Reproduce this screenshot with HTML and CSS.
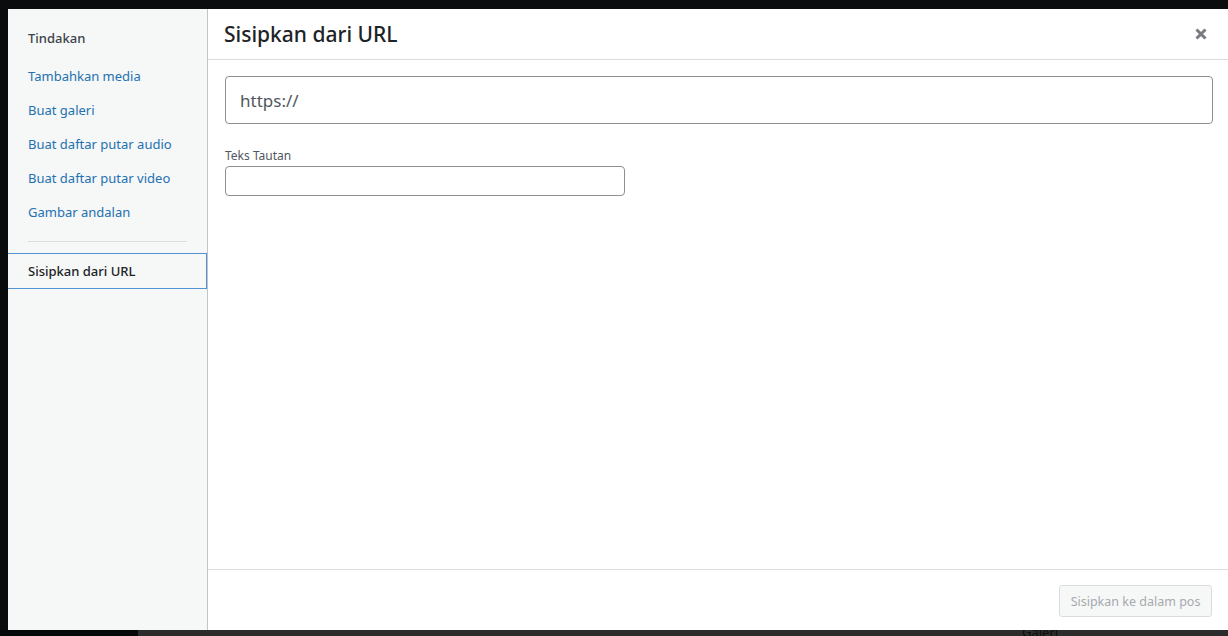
FILE: index.html
```html
<!DOCTYPE html>
<html lang="id">
<head>
<meta charset="utf-8">
<title>Sisipkan dari URL</title>
<link rel="stylesheet" href="styles.css">
</head>
<body>
<div class="screen">
  <div class="top-strip"></div>
  <div class="middle">
    <div class="left-strip"></div>
    <div class="modal">
      <aside class="menu">
        <h2 class="menu-heading">Tindakan</h2>
        <a class="menu-item" href="#">Tambahkan media</a>
        <a class="menu-item" href="#">Buat galeri</a>
        <a class="menu-item" href="#">Buat daftar putar audio</a>
        <a class="menu-item" href="#">Buat daftar putar video</a>
        <a class="menu-item" href="#">Gambar andalan</a>
        <div class="separator"></div>
        <a class="menu-item active" href="#">Sisipkan dari URL</a>
      </aside>
      <section class="frame">
        <header class="frame-title">
          <h1>Sisipkan dari URL</h1>
          <button class="close" aria-label="Tutup">
            <svg width="12" height="12" viewBox="0 0 12 12"><path d="M1.5 1.5 L10.5 10.5 M10.5 1.5 L1.5 10.5" stroke="#787c82" stroke-width="3" stroke-linecap="butt"/></svg>
          </button>
        </header>
        <div class="content">
          <input class="url-input" type="text" value="https://">
          <label class="field-label" for="teks">Teks Tautan</label>
          <input class="text-input" id="teks" type="text">
        </div>
        <footer class="toolbar">
          <button class="btn-insert" disabled>Sisipkan ke dalam pos</button>
        </footer>
      </section>
    </div>
  </div>
  <div class="bottom-strip">
    <div class="bs-dark"></div>
    <div class="bs-gray"><span class="bs-text">Galeri</span></div>
  </div>
</div>
</body>
</html>
```

FILE: styles.css
```css
html, body {
  margin: 0;
  padding: 0;
  height: 100%;
  overflow: hidden;
}
body {
  background: #0b0c0e;
  font-family: "Noto Sans", "Open Sans", sans-serif;
}
.screen {
  display: flex;
  flex-direction: column;
  height: 636px;
  width: 1228px;
}
.top-strip {
  height: 9px;
  background: #0b0c0e;
}
.middle {
  display: flex;
  height: 621px;
}
.left-strip {
  width: 8px;
  background: #0a0b0c;
}
.modal {
  flex: 1;
  display: flex;
  background: #fff;
}
.menu {
  width: 199px;
  background: #f6f7f7;
  border-right: 1px solid #c3c4c7;
  display: flex;
  flex-direction: column;
  padding-top: 20px;
}
.menu-heading {
  margin: 0 0 12px 20px;
  font-size: 13px;
  font-weight: 500;
  color: #3c434a;
  line-height: 18px;
}
.menu-item {
  display: block;
  padding: 0 20px;
  height: 34px;
  line-height: 34px;
  font-size: 13px;
  color: #2271b1;
  text-decoration: none;
}
.separator {
  height: 1px;
  background: #dcdcde;
  margin: 12px 20px 11px;
}
.menu-item.active {
  color: #1d2327;
  font-weight: 500;
  height: 34px;
  line-height: 34px;
  border: 1px solid #4f94d4;
  border-left: none;
}
.frame {
  flex: 1;
  display: flex;
  flex-direction: column;
}
.frame-title {
  height: 51px;
  border-bottom: 1px solid #dcdcde;
  display: flex;
  align-items: center;
  justify-content: space-between;
  padding: 0 16px;
  box-sizing: border-box;
}
.frame-title h1 {
  margin: 0;
  font-size: 21px;
  font-weight: 500;
  color: #1d2327;
  letter-spacing: 0;
}
.close {
  background: none;
  border: none;
  padding: 0;
  margin-right: 5px;
  width: 12px;
  height: 12px;
  display: flex;
}
.content {
  flex: 1;
  padding: 16px 15px 0 17px;
  display: flex;
  flex-direction: column;
  align-items: flex-start;
}
.url-input {
  width: 100%;
  height: 48px;
  box-sizing: border-box;
  border: 1px solid #8c8f94;
  border-radius: 4px;
  padding: 0 14px;
  font-family: inherit;
  font-size: 17px;
  color: #50575e;
}
.field-label {
  margin-top: 24px;
  font-size: 12px;
  color: #50575e;
  line-height: 16px;
}
.text-input {
  margin-top: 2px;
  width: 400px;
  height: 30px;
  box-sizing: border-box;
  border: 1px solid #8c8f94;
  border-radius: 4px;
}
.toolbar {
  height: 61px;
  border-top: 1px solid #dcdcde;
  box-sizing: border-box;
  display: flex;
  justify-content: flex-end;
  align-items: center;
  padding: 0 16px 0 0;
}
.btn-insert {
  height: 32px;
  width: 153px;
  margin-top: 2px;
  background: #f6f7f7;
  border: 1px solid #dcdcde;
  border-radius: 3px;
  color: #a7aaad;
  font-family: inherit;
  font-size: 12.5px;
  padding: 0;
}
.bottom-strip {
  height: 6px;
  display: flex;
  overflow: hidden;
}
.bs-dark {
  width: 138px;
  background: #060708;
}
.bs-gray {
  flex: 1;
  background: #2c2c2c;
  position: relative;
}
.bs-text {
  position: absolute;
  left: 884px;
  top: -6px;
  font-size: 13px;
  line-height: 16px;
  color: #0e0e0e;
}
```
